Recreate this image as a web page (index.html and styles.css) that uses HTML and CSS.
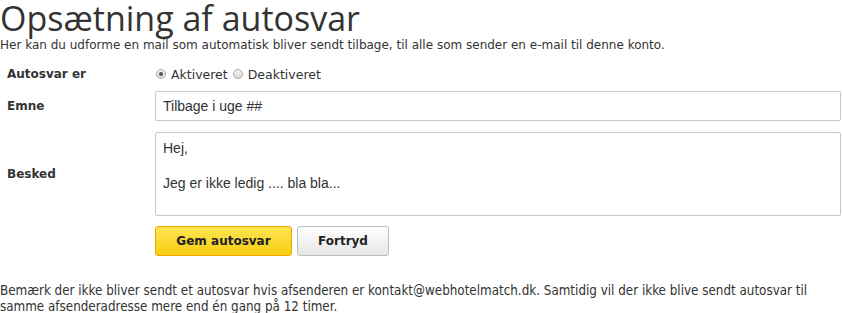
FILE: index.html
```html
<!DOCTYPE html>
<html lang="da">
<head>
<meta charset="utf-8">
<title>Opsætning af autosvar</title>
<link rel="stylesheet" href="styles.css">
</head>
<body>
<div class="page">
  <h1 class="title">Opsætning af autosvar</h1>
  <p class="intro">Her kan du udforme en mail som automatisk bliver sendt tilbage, til alle som sender en e-mail til denne konto.</p>
  <form class="form">
    <div class="row row-radio">
      <div class="label">Autosvar er</div>
      <div class="field radios">
        <label class="radio"><span class="dot checked"></span>Aktiveret</label>
        <label class="radio"><span class="dot"></span>Deaktiveret</label>
      </div>
    </div>
    <div class="row row-input">
      <div class="label">Emne</div>
      <div class="field"><div class="input">Tilbage i uge ##</div></div>
    </div>
    <div class="row row-text">
      <div class="label">Besked</div>
      <div class="field"><div class="textarea">Hej,<br><br>Jeg er ikke ledig .... bla bla...</div></div>
    </div>
    <div class="row row-buttons">
      <div class="label"></div>
      <div class="field buttons">
        <button type="button" class="btn btn-primary">Gem autosvar</button>
        <button type="button" class="btn btn-default">Fortryd</button>
      </div>
    </div>
  </form>
  <p class="note">Bemærk der ikke bliver sendt et autosvar hvis afsenderen er kontakt@webhotelmatch.dk. Samtidig vil der ikke blive sendt autosvar til samme afsenderadresse mere end én gang på 12 timer.</p>
</div>
</body>
</html>
```
FILE: styles.css
```css
html, body { margin: 0; padding: 0; background: #fff; }
.page { padding: 0 1px 0 0; color: #333; }
.title {
  font-family: "Open Sans", sans-serif;
  font-weight: 400;
  font-size: 34px;
  line-height: 36px;
  margin: 0;
  color: #333;
}
.intro {
  font-family: "DejaVu Sans", Verdana, sans-serif;
  font-size: 12px;
  line-height: 14px;
  margin: 2px 0 0 0;
  color: #333;
}
.form { margin-top: 12px; }
.row { display: flex; align-items: center; }
.label {
  width: 155px;
  flex: none;
  box-sizing: border-box;
  padding-left: 7px;
  font-family: "DejaVu Sans", Verdana, sans-serif;
  font-weight: bold;
  font-size: 12px;
  color: #333;
}
.field { flex: 1; }
.row-radio { height: 20px; margin-top: 1px; }
.radios { display: flex; gap: 4px; font-family: "DejaVu Sans", Verdana, sans-serif; font-size: 12.5px; color: #333; }
.radio { display: flex; align-items: center; gap: 5px; }
.dot {
  width: 10px; height: 10px; border-radius: 50%;
  border: 1px solid #aaa; background: linear-gradient(#f2f2f2, #dcdcdc);
  display: inline-block; position: relative; box-sizing: border-box;
  margin-left: 1px;
}
.dot.checked::after {
  content: ""; position: absolute; left: 2px; top: 2px; width: 4px; height: 4px; border-radius: 50%; background: #555;
}
.row-input { margin-top: 7px; }
.input {
  height: 30px; box-sizing: border-box; border: 1px solid #c8c8c8; border-radius: 2px;
  padding: 0 7px; display: flex; align-items: center;
  font-family: "Liberation Sans", Arial, sans-serif; font-size: 14px; color: #333;
}
.row-text { margin-top: 11px; }
.textarea {
  height: 84px; box-sizing: border-box; border: 1px solid #c8c8c8; border-radius: 2px;
  padding: 7px 7px; line-height: 17.5px;
  font-family: "Liberation Sans", Arial, sans-serif; font-size: 14px; color: #333;
}
.row-buttons { margin-top: 10px; }
.buttons { display: flex; gap: 5px; }
.btn {
  height: 30px; box-sizing: border-box; border-radius: 3px;
  font-family: "DejaVu Sans", Verdana, sans-serif; font-weight: bold; font-size: 12px; color: #222;
  cursor: pointer; padding: 0;
}
.btn-primary {
  width: 137px; border: 1px solid #f0a800;
  background: linear-gradient(#fde451, #f6cf13);
}
.btn-default {
  width: 92px; border: 1px solid #bbb;
  background: linear-gradient(#fff, #e6e6e6);
}
.note {
  font-family: "DejaVu Sans Condensed", Tahoma, sans-serif;
  font-size: 13.3px; line-height: 16px; margin: 27px 0 0 0; color: #333;
}
```
